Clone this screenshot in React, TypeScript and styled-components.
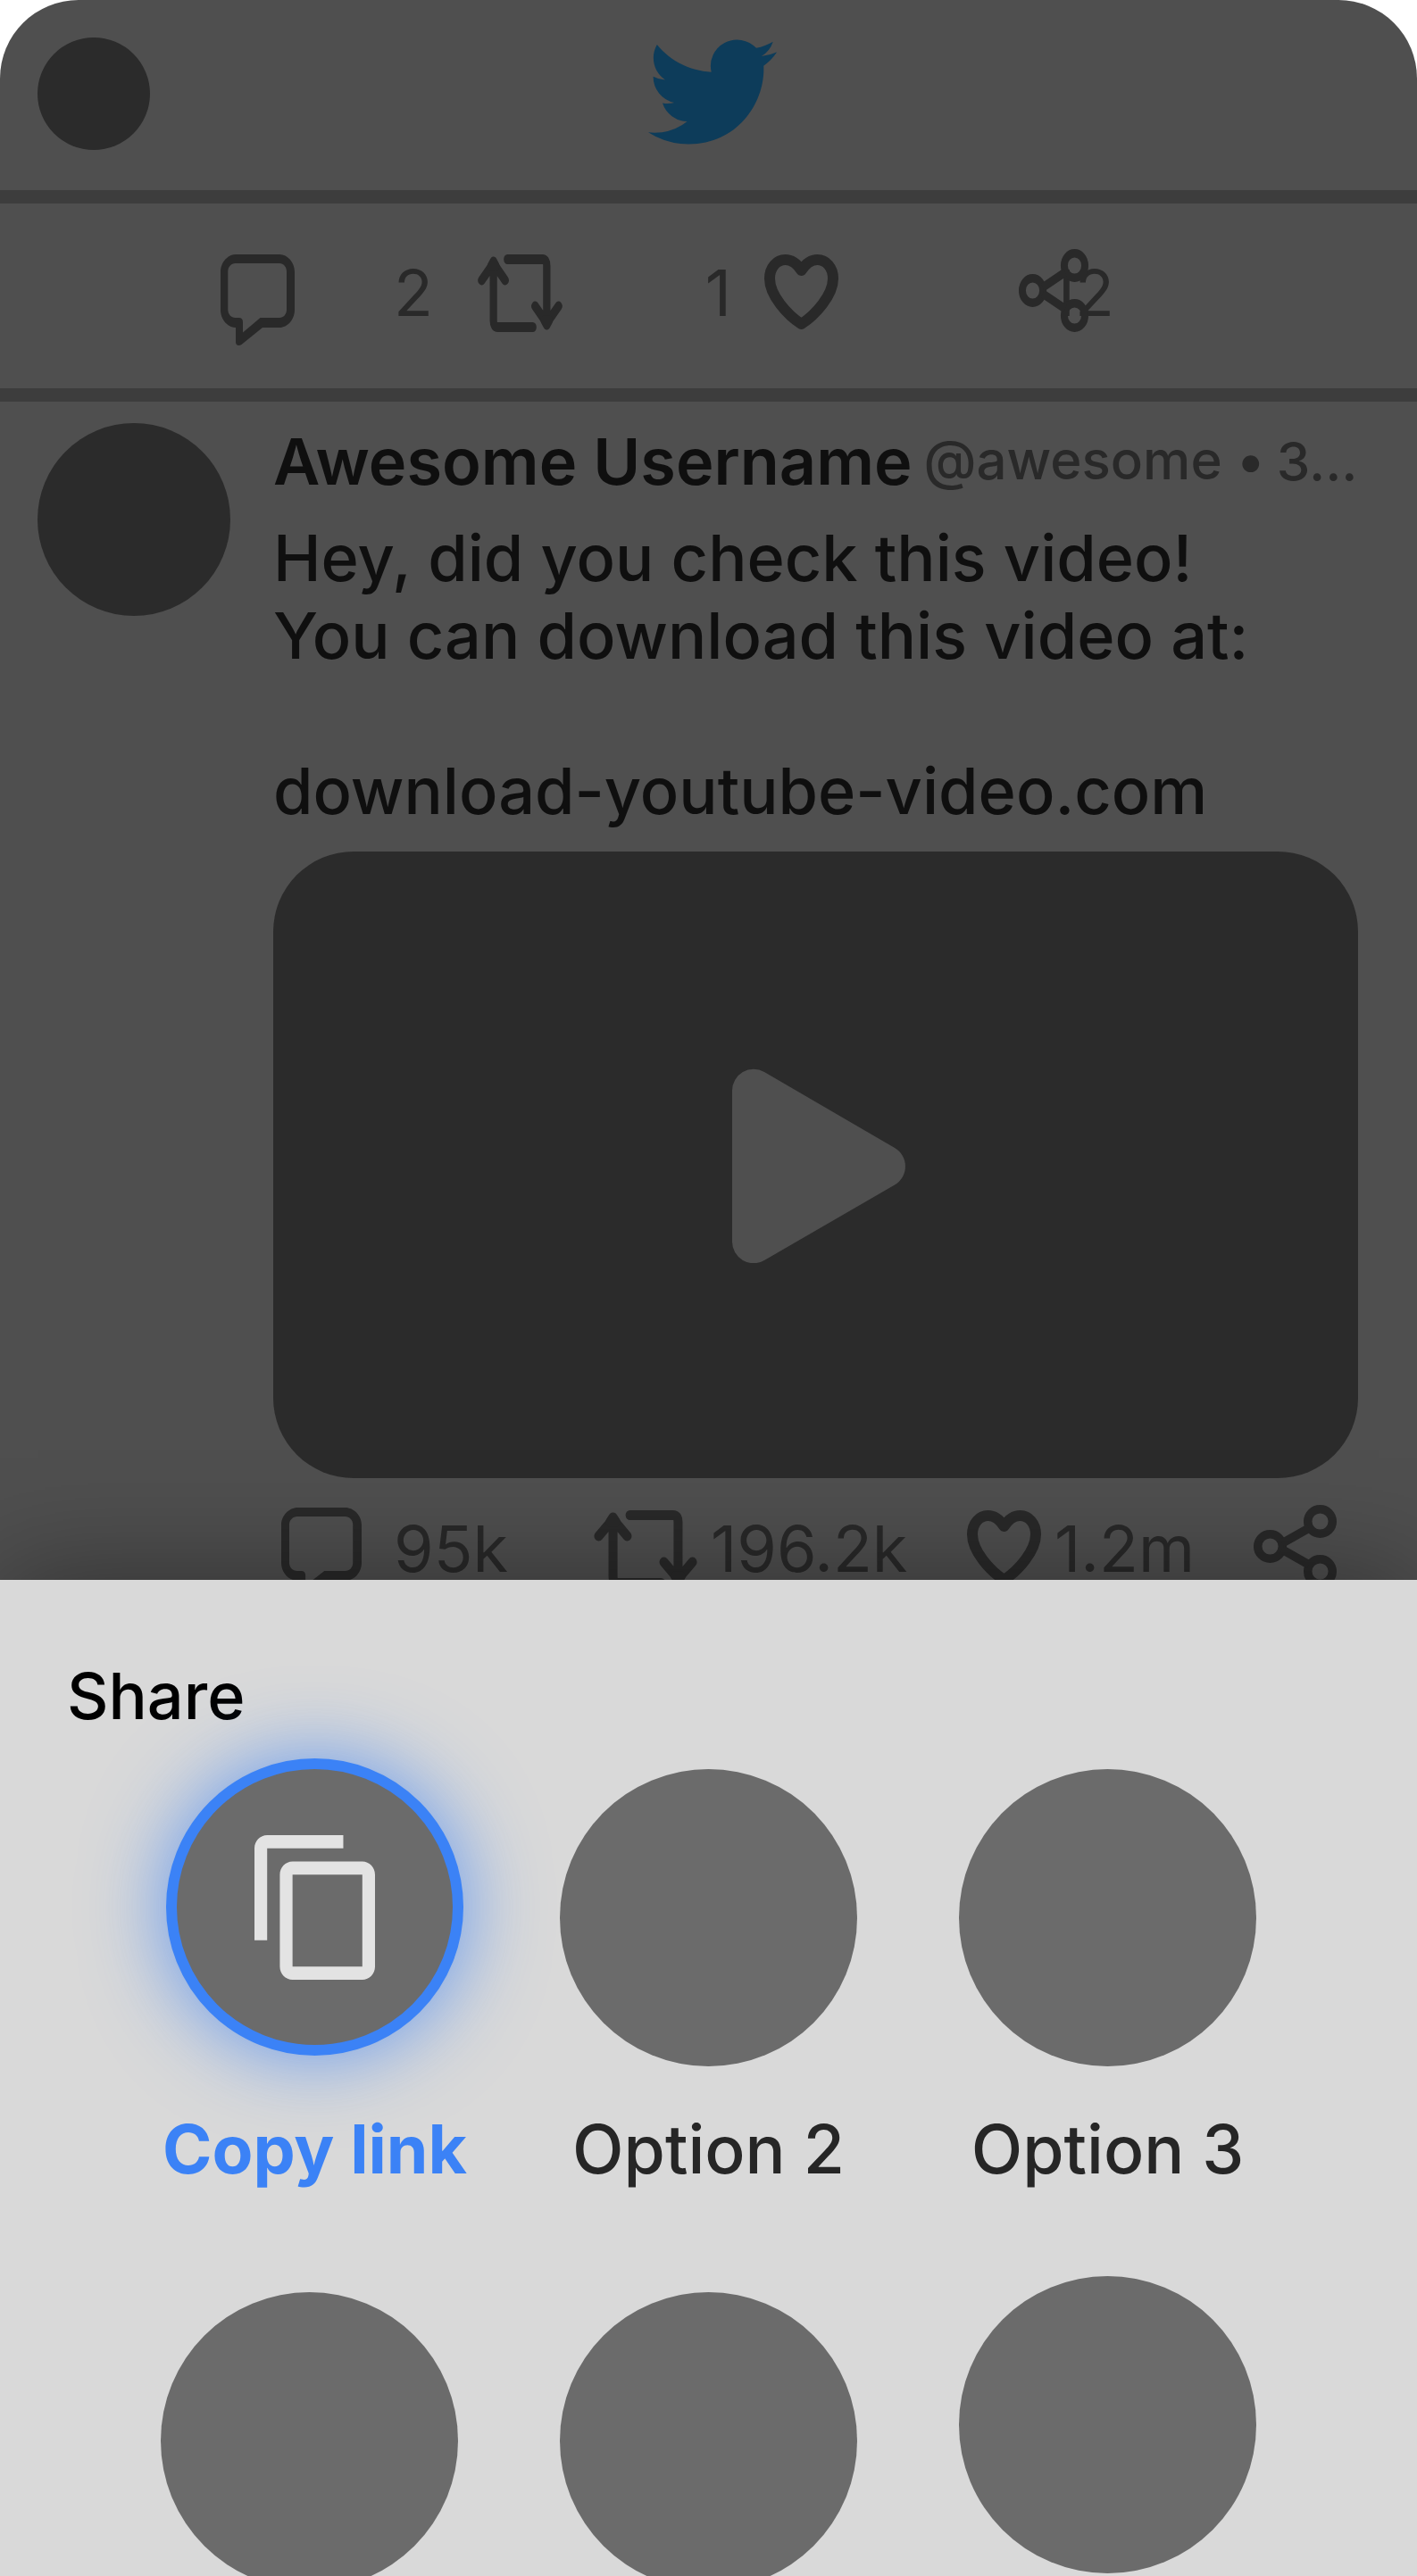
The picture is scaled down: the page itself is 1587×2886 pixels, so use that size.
import React from "react";
import styled, { createGlobalStyle } from "styled-components";

const color = {
  feed: "#4f4f4f",
  divider: "#3d3d3d",
  block: "#2b2b2b",
  muted: "#292929",
  ink: "#0f0f0f",
  bird: "#0d3c5a",
  sheet: "#d9d9d9",
  option: "#6b6b6b",
  optionText: "#262626",
  accent: "#3b82f6",
  glyph: "#e3e3e3",
};

const GlobalStyle = createGlobalStyle`
  *, *::before, *::after { box-sizing: border-box; }
  body {
    margin: 0;
    background: #ffffff;
    font-family: Inter, "Liberation Sans", sans-serif;
  }
  button {
    padding: 0;
    border: 0;
    background: none;
    font: inherit;
    color: inherit;
    cursor: pointer;
  }
`;

const Screen = styled.div`
  display: flex;
  flex-direction: column;
  height: 100vh;
  overflow: hidden;
  border-radius: 88px 88px 0 0;
  background: ${color.feed};
`;

const Feed = styled.main`
  flex: 1 1 0;
  min-height: 0;
  overflow: hidden;
`;

const TopBar = styled.header`
  display: grid;
  grid-template-columns: 1fr auto 1fr;
  align-items: center;
  padding: 42px 33px 45px 42px;
  border-bottom: 15px solid ${color.divider};
`;

const Avatar = styled.div<{ $size: number }>`
  flex: none;
  width: ${(p) => p.$size}px;
  height: ${(p) => p.$size}px;
  border-radius: 50%;
  background: ${color.block};
`;

const Bird = styled.svg`
  display: block;
  width: 144px;
  height: 144px;
  margin: -11px 0 -7px;
  fill: ${color.bird};
`;

const CompactActions = styled.div`
  display: grid;
  grid-template-columns: 238px 284px 379px auto;
  column-gap: 50px;
  height: 222px;
  padding: 57px 0 0 247px;
  border-bottom: 15px solid ${color.divider};
  color: ${color.muted};

  & > :nth-child(3) {
    margin-left: -13px;
  }

  & > :nth-child(4) {
    margin-left: -157px;
  }
`;

const PostActions = styled.div`
  display: grid;
  grid-template-columns: 350px 418px 321px 93px;
  margin-top: 36px;
  padding-left: 9px;
  color: ${color.muted};
`;

const Action = styled.button<{ $gap?: number; $spread?: boolean }>`
  display: flex;
  align-items: flex-start;
  justify-content: ${(p) => (p.$spread ? "space-between" : "flex-start")};
  gap: ${(p) => p.$gap ?? 0}px;
  height: 87px;
`;

const Count = styled.span`
  font-size: 72px;
  line-height: 86px;
  font-weight: 400;
`;

const Icon = styled.svg<{ $width: number }>`
  display: block;
  flex: none;
  width: ${(p) => p.$width}px;
  height: 87px;
  overflow: visible;
`;

const Post = styled.article`
  display: flex;
  gap: 48px;
  padding: 24px 66px 0 42px;
`;

const PostBody = styled.div`
  flex: 1;
  min-width: 0;
`;

const Byline = styled.div`
  display: flex;
  align-items: center;
  gap: 13px;
  height: 86px;
  white-space: nowrap;
`;

const Name = styled.h2`
  margin: 0;
  font-size: 72px;
  line-height: 86px;
  font-weight: 600;
  color: ${color.ink};
`;

const Meta = styled.span`
  font-size: 60px;
  line-height: 73px;
  font-weight: 500;
  color: ${color.muted};
`;

const Handle = styled(Meta)`
  padding-bottom: 4px;
`;

const Message = styled.p`
  margin: 21px 0 25px;
  font-size: 72px;
  line-height: 87px;
  font-weight: 500;
  color: ${color.ink};
  white-space: pre-line;

  a {
    color: inherit;
    text-decoration: none;
  }
`;

const Video = styled.button`
  display: flex;
  align-items: center;
  justify-content: center;
  width: 100%;
  height: 702px;
  border-radius: 90px;
  background: ${color.block};
`;

const Play = styled.svg`
  display: block;
  width: 201px;
  height: 220px;
  fill: ${color.feed};
`;

const Sheet = styled.section`
  position: relative;
  z-index: 1;
  flex: none;
  max-height: 1116px;
  padding-top: 86px;
  overflow: hidden;
  background: ${color.sheet};
  box-shadow: 0 0 120px rgba(0, 0, 0, 0.4);
`;

const SheetTitle = styled.h1`
  margin: 0 0 27px;
  padding-left: 75px;
  font-size: 72px;
  line-height: 87px;
  font-weight: 500;
  color: #000000;
`;

const Options = styled.div`
  display: grid;
  grid-template-columns: repeat(3, 333px);
  gap: 97px 114px;
  justify-content: center;
  align-items: end;
`;

const Option = styled.button<{ $active?: boolean }>`
  display: flex;
  flex-direction: column;
  align-items: center;
  justify-self: start;
  width: max-content;
  min-width: ${(p) => (p.$active ? 345 : 333)}px;
  gap: ${(p) => (p.$active ? 60 : 48)}px;
  font-size: 75px;
  line-height: 90px;
  font-weight: ${(p) => (p.$active ? 700 : 500)};
  color: ${(p) => (p.$active ? color.accent : color.optionText)};
  white-space: nowrap;
`;

const RaisedOption = styled(Option)`
  padding-bottom: 18px;
`;

const Disc = styled.span<{ $active?: boolean }>`
  display: flex;
  align-items: center;
  justify-content: center;
  width: 333px;
  height: 333px;
  border: ${(p) => (p.$active ? `12px solid ${color.accent}` : "0")};
  border-radius: 50%;
  background: ${color.option};
  box-shadow: ${(p) => (p.$active ? "0 0 90px rgba(59, 130, 246, 0.75)" : "none")};
`;

const CopyGlyph = styled.svg`
  display: block;
  width: 135px;
  height: 162px;
  fill: ${color.glyph};
`;

function CommentIcon({ wide }: { wide?: boolean }) {
  return (
    <Icon
      $width={wide ? 90 : 83}
      viewBox={wide ? "0 3 83 87" : "0 0 83 87"}
      preserveAspectRatio="none"
      fill="currentColor"
      fillRule="evenodd"
      aria-hidden="true"
    >
      <path d="M17 0H66C75 0 83 9 83 19.500V62C83 73 75 82 66 82H47L23.500 101Q22 102 20.500 102Q17 102 17 98V82C8 82 0 73 0 62V19.500C0 9 8 0 17 0ZM16.500 10C12 10 8.300 14 8.300 19V62C8.300 67 12 71 16.500 71H20.500Q25 71 25 76V87.500L44.500 71H66C70.500 71 74 67 74 62V19C74 14 70.500 10 66 10Z" />
    </Icon>
  );
}

function RepostIcon({ wide }: { wide?: boolean }) {
  return (
    <Icon
      $width={wide ? 116 : 95}
      viewBox="0 0 127 87"
      preserveAspectRatio="none"
      fill="none"
      stroke="currentColor"
      strokeWidth="11"
      strokeLinecap="round"
      strokeLinejoin="round"
      aria-hidden="true"
    >
      <path d="M6 29L23.600 10L41 29M23.600 10V74Q23.600 81.500 30 81.500H82.500" />
      <path d="M121 58L103.400 77L86 58M103.400 77V13Q103.400 5.500 97 5.500H44.500" />
      <path d="M20 13L23.600 8L27.200 13ZM99.800 74L103.400 79L107 74Z" />
    </Icon>
  );
}

function HeartIcon() {
  return (
    <Icon
      $width={83}
      viewBox="0 0 83 87"
      fill="none"
      stroke="currentColor"
      strokeWidth="12"
      strokeLinejoin="round"
      aria-hidden="true"
    >
      <path d="M41.500 78C26 68 6 46 6 27C6 14.500 14 6 23.500 6C31 6 37 11 41.500 18C46 11 52 6 59.500 6C69 6 77 14.500 77 27C77 46 57 68 41.500 78Z" />
    </Icon>
  );
}

function ShareIcon({ wide }: { wide?: boolean }) {
  return (
    <Icon
      $width={wide ? 93 : 78}
      viewBox="0 6 93 87"
      preserveAspectRatio="none"
      fill="none"
      stroke="currentColor"
      strokeWidth="9.500"
      aria-hidden="true"
    >
      <circle cx="18.500" cy="46.500" r="13.800" />
      <circle cx="74.500" cy="18.500" r="13.800" />
      <circle cx="74.500" cy="74.500" r="13.800" />
      <path d="M32 43L62 26M32 50L62 67" />
    </Icon>
  );
}

export default function App() {
  return (
    <>
      <GlobalStyle />
      <Screen>
        <Feed>
          <TopBar>
            <Avatar $size={126} />
            <Bird viewBox="0 0 24 24" role="img" aria-label="Twitter">
              <path d="M23.953 4.57a10 10 0 01-2.825.775 4.958 4.958 0 002.163-2.723c-.951.555-2.005.959-3.127 1.184a4.92 4.92 0 00-8.384 4.482C7.69 8.095 4.067 6.13 1.64 3.162a4.822 4.822 0 00-.666 2.475c0 1.71.87 3.213 2.188 4.096a4.904 4.904 0 01-2.228-.616v.06a4.923 4.923 0 003.946 4.827 4.996 4.996 0 01-2.212.085 4.936 4.936 0 004.604 3.417 9.867 9.867 0 01-6.102 2.105c-.39 0-.779-.023-1.17-.067a13.995 13.995 0 007.557 2.209c9.053 0 13.998-7.496 13.998-13.985 0-.21 0-.42-.015-.63A9.935 9.935 0 0024 4.59z" />
            </Bird>
          </TopBar>

          <CompactActions>
            <Action $spread aria-label="Reply">
              <CommentIcon />
              <Count>2</Count>
            </Action>
            <Action $spread aria-label="Repost">
              <RepostIcon />
              <Count>1</Count>
            </Action>
            <Action $spread aria-label="Like">
              <HeartIcon />
              <Count>12</Count>
            </Action>
            <Action aria-label="Share">
              <ShareIcon />
            </Action>
          </CompactActions>

          <Post>
            <Avatar $size={216} />
            <PostBody>
              <Byline>
                <Name>Awesome Username</Name>
                <Handle>@awesome •</Handle>
                <Meta>3...</Meta>
              </Byline>
              <Message>
                {"Hey, did you check this video!\nYou can download this video at:\n\n"}
                <a href="#video">download-youtube-video.com</a>
              </Message>
              <Video aria-label="Play video">
                <Play viewBox="-7 -3 201 220" aria-hidden="true">
                  <path d="M0 24A24 24 0 0 1 36 3L182 88A24 24 0 0 1 182 129.500L36 214A24 24 0 0 1 0 193Z" />
                </Play>
              </Video>
              <PostActions>
                <Action $gap={36} aria-label="Reply">
                  <CommentIcon wide />
                  <Count>95k</Count>
                </Action>
                <Action $gap={15} aria-label="Repost">
                  <RepostIcon wide />
                  <Count>196.2k</Count>
                </Action>
                <Action $gap={15} aria-label="Like">
                  <HeartIcon />
                  <Count>1.2m</Count>
                </Action>
                <Action aria-label="Share">
                  <ShareIcon wide />
                </Action>
              </PostActions>
            </PostBody>
          </Post>
        </Feed>

        <Sheet>
          <SheetTitle>Share</SheetTitle>
          <Options>
            <Option $active>
              <Disc $active>
                <CopyGlyph
                  viewBox="2 1 19 22"
                  preserveAspectRatio="none"
                  aria-hidden="true"
                >
                  <path d="M16 1H4c-1.100 0-2 .9-2 2v14h2V3h12V1zm3 4H8c-1.100 0-2 .9-2 2v14c0 1.100.9 2 2 2h11c1.100 0 2-.9 2-2V7c0-1.100-.9-2-2-2zm0 16H8V7h11v14z" />
                </CopyGlyph>
              </Disc>
              <span>Copy link</span>
            </Option>
            <Option>
              <Disc />
              <span>Option 2</span>
            </Option>
            <Option>
              <Disc />
              <span>Option 3</span>
            </Option>
            <Option aria-label="Option 4">
              <Disc />
            </Option>
            <Option aria-label="Option 5">
              <Disc />
            </Option>
            <RaisedOption aria-label="Option 6">
              <Disc />
            </RaisedOption>
          </Options>
        </Sheet>
      </Screen>
    </>
  );
}
